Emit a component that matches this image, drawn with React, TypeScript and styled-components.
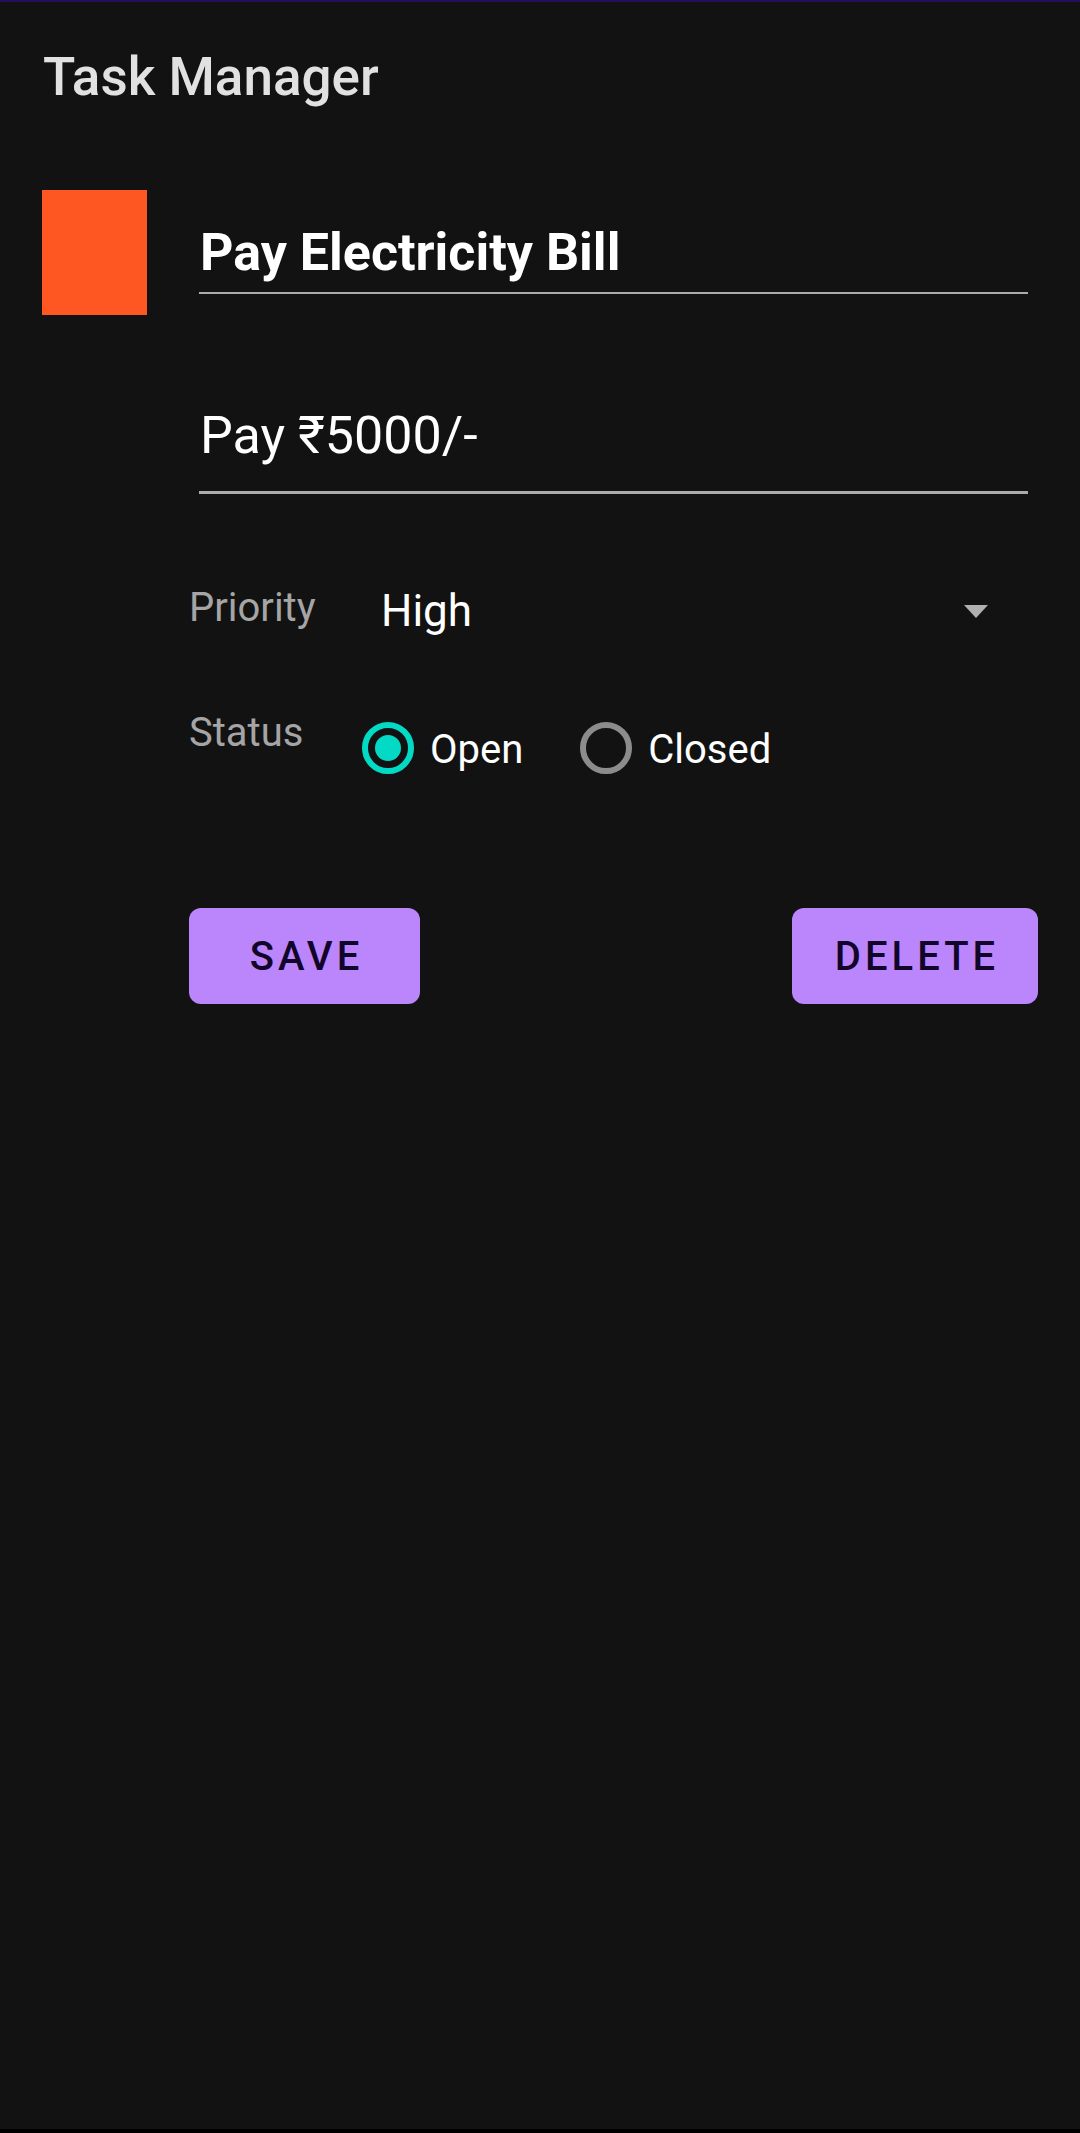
import React, { useState } from 'react'
import styled, { createGlobalStyle } from 'styled-components'

const GlobalStyle = createGlobalStyle`
  html, body {
    margin: 0;
    padding: 0;
    background: #000;
  }
  body {
    font-family: Roboto, "Noto Sans", "Liberation Sans", sans-serif;
    -webkit-font-smoothing: antialiased;
  }
`

type Status = 'open' | 'closed'

const App: React.FC = () => {
  const [status, setStatus] = useState<Status>('open')

  return (
    <>
      <GlobalStyle />
      <Page>
        <Toolbar>
          <ToolbarTitle>Task Manager</ToolbarTitle>
        </Toolbar>

        {/* Title + description */}
        <TopRow>
          <ColorSwatch color="#FF5722" />
          <Fields>
            <TitleField>Pay Electricity Bill</TitleField>
            <DescriptionField>Pay ₹5000/-</DescriptionField>
          </Fields>
        </TopRow>

        {/* Priority / status / actions */}
        <Details>
          <PriorityRow>
            <Label>Priority</Label>
            <Spinner>
              <SpinnerValue>High</SpinnerValue>
              <Caret />
            </Spinner>
          </PriorityRow>

          <StatusRow>
            <Label>Status</Label>
            <RadioGroup>
              <RadioItem onClick={() => setStatus('open')}>
                <RadioCircle checked={status === 'open'} />
                <RadioText>Open</RadioText>
              </RadioItem>
              <RadioItem onClick={() => setStatus('closed')}>
                <RadioCircle checked={status === 'closed'} />
                <RadioText>Closed</RadioText>
              </RadioItem>
            </RadioGroup>
          </StatusRow>

          <Actions>
            <ActionButton width={231}>Save</ActionButton>
            <ActionButton width={246}>Delete</ActionButton>
          </Actions>
        </Details>
      </Page>
    </>
  )
}

export default App

const Page = styled.div`
  min-height: calc(100vh - 4px);
  box-sizing: border-box;
  background: #121212;
  border-top: 2px solid #260e5e;
  padding: 0 42px;
`

const Toolbar = styled.header`
  padding-top: 44px;
`

const ToolbarTitle = styled.h1`
  margin: 0;
  padding-left: 1px;
  font-size: 53px;
  line-height: 62px;
  font-weight: 500;
  color: #e1e1e1;
`

const TopRow = styled.div`
  display: grid;
  grid-template-columns: 105px 1fr;
  column-gap: 52px;
  align-items: start;
  margin-top: 82px;
  padding-right: 10px;
`

const ColorSwatch = styled.div<{ color: string }>`
  height: 125px;
  background: ${props => props.color};
`

const Fields = styled.div`
  display: flex;
  flex-direction: column;
`

const TitleField = styled.div`
  margin-top: 32px;
  padding: 0 0 8px 1px;
  font-size: 52px;
  line-height: 62px;
  font-weight: 700;
  color: #fff;
  border-bottom: 2px solid #ababab;
`

const DescriptionField = styled.div`
  margin-top: 111px;
  padding: 0 0 24px 1px;
  font-size: 52px;
  line-height: 62px;
  font-weight: 400;
  color: #fff;
  border-bottom: 3px solid #ababab;
`

const Details = styled.div`
  margin-left: 147px;
  margin-top: 91px;
`

const PriorityRow = styled.div`
  display: grid;
  grid-template-columns: 192px 1fr;
  align-items: start;
`

const StatusRow = styled(PriorityRow)`
  margin-top: 73px;
`

const Label = styled.div`
  font-size: 40px;
  line-height: 46px;
  color: #a5a5a5;
`

const Spinner = styled.div`
  display: flex;
  align-items: center;
  justify-content: space-between;
  padding-right: 50px;
`

const SpinnerValue = styled.div`
  font-size: 44px;
  line-height: 52px;
  color: #fff;
`

const Caret = styled.span`
  width: 0;
  height: 0;
  border-left: 12.5px solid transparent;
  border-right: 12.5px solid transparent;
  border-top: 13px solid #b0b0b0;
`

const RadioGroup = styled.div`
  display: flex;
  align-items: center;
  gap: 57px;
  margin-top: 9px;
  margin-left: -19px;
`

const RadioItem = styled.label`
  display: flex;
  align-items: center;
  gap: 16px;
  cursor: pointer;
`

const RadioCircle = styled.span<{ checked: boolean }>`
  box-sizing: border-box;
  width: 52px;
  height: 52px;
  border-radius: 50%;
  border: 6px solid ${props => (props.checked ? '#03dac5' : '#8c8c8c')};
  display: flex;
  align-items: center;
  justify-content: center;

  &::after {
    content: '';
    width: 26px;
    height: 26px;
    border-radius: 50%;
    background: #03dac5;
    display: ${props => (props.checked ? 'block' : 'none')};
  }
`

const RadioText = styled.span`
  font-size: 40px;
  line-height: 52px;
  padding-top: 5px;
  color: #fff;
`

const Actions = styled.div`
  display: flex;
  justify-content: space-between;
  margin-top: 132px;
`

const ActionButton = styled.button<{ width: number }>`
  width: ${props => props.width}px;
  height: 96px;
  border: none;
  border-radius: 12px;
  background: #bb86fc;
  color: #12052a;
  font-family: Roboto, "Noto Sans", sans-serif;
  font-size: 40px;
  font-weight: 500;
  letter-spacing: 4px;
  text-transform: uppercase;
  padding: 0 0 0 4px;
  cursor: pointer;
`
